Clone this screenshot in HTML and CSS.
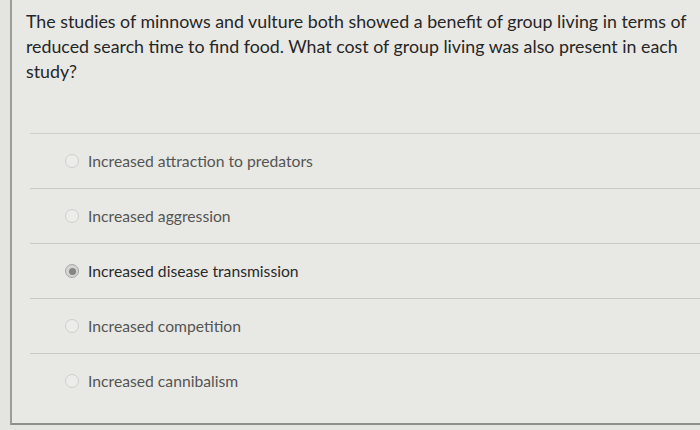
FILE: index.html
```html
<!DOCTYPE html>
<html>
<head>
<meta charset="utf-8">
<link rel="stylesheet" href="styles.css">
</head>
<body>
<div class="panel">
  <div class="question">The studies of minnows and vulture both showed a benefit of group living in terms of reduced search time to find food. What cost of group living was also present in each study?</div>
  <ul class="options">
    <li class="option"><span class="radio"></span><span class="label">Increased attraction to predators</span></li>
    <li class="option"><span class="radio"></span><span class="label">Increased aggression</span></li>
    <li class="option selected"><span class="radio"></span><span class="label">Increased disease transmission</span></li>
    <li class="option"><span class="radio"></span><span class="label">Increased competition</span></li>
    <li class="option"><span class="radio"></span><span class="label">Increased cannibalism</span></li>
  </ul>
</div>
</body>
</html>
```

FILE: styles.css
```css
html, body {
  margin: 0;
  padding: 0;
  background: #e4e4e1;
}
body {
  width: 700px;
  height: 430px;
  overflow: hidden;
  font-family: Lato, "Liberation Sans", sans-serif;
}
.panel {
  margin-left: 10px;
  height: 425px;
  box-sizing: border-box;
  border-left: 2px solid #9c9c9a;
  border-bottom: 2px solid #8e8e8c;
  background: #e8e8e5;
}
.question {
  padding: 9px 6px 0 14px;
  font-size: 17.8px;
  line-height: 25px;
  color: #262626;
}
.options {
  list-style: none;
  margin: 49px 0 0 18px;
  padding: 0;
  border-top: 1px solid #cfcfcc;
}
.option {
  height: 54px;
  display: flex;
  align-items: center;
  padding-left: 35px;
  border-bottom: 1px solid #c8c8c5;
}
.option:last-child {
  border-bottom: none;
}
.radio {
  width: 14px;
  height: 14px;
  border-radius: 50%;
  border: 1px solid #cfcfcc;
  background: #ececea;
  box-sizing: border-box;
  margin-right: 9px;
  position: relative;
  flex: none;
}
.selected .radio {
  border: 1px solid #a8a8a6;
  background: #d4d4d2;
}
.selected .radio::after {
  content: "";
  position: absolute;
  left: 2.5px;
  top: 2.5px;
  width: 7px;
  height: 7px;
  border-radius: 50%;
  background: #858583;
}
.label {
  font-size: 15.7px;
  color: #555553;
}
.selected .label {
  color: #2a2a2a;
}
```
